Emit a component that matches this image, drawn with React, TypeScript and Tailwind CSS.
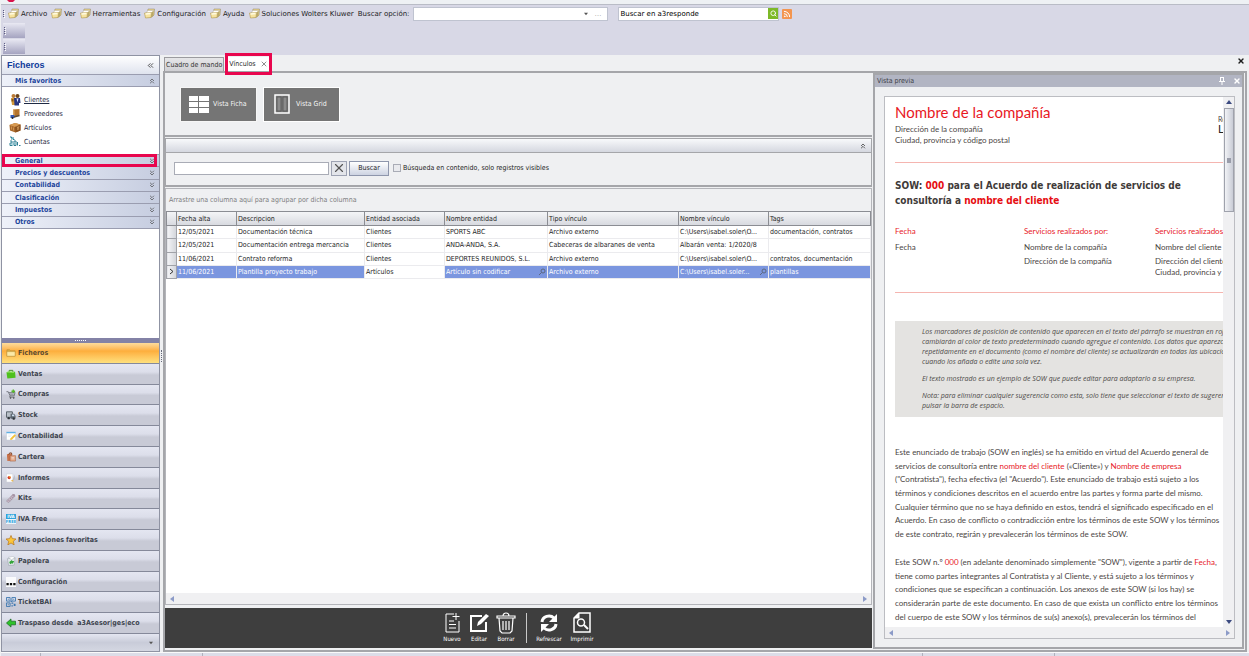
import React from 'react';
import clsx from 'clsx';
import { ChevronsDown, ChevronsLeft, ChevronsUp, Rss, Search, X } from 'lucide-react';

const MENU = ['Archivo', 'Ver', 'Herramientas', 'Configuración', 'Ayuda', 'Soluciones Wolters Kluwer'];

const GROUPS = ['General', 'Precios y descuentos', 'Contabilidad', 'Clasificación', 'Impuestos', 'Otros'];

const COLUMNS = [
  { label: 'Fecha alta', width: 'w-[60px]' },
  { label: 'Descripcion', width: 'w-[128px]' },
  { label: 'Entidad asociada', width: 'w-[80px]' },
  { label: 'Nombre entidad', width: 'w-[103px]' },
  { label: 'Tipo vínculo', width: 'w-[131px]' },
  { label: 'Nombre vínculo', width: 'w-[90px]' },
  { label: 'Tags', width: '' },
];

const ROWS = [
  ['12/05/2021', 'Documentación técnica', 'Clientes', 'SPORTS ABC', 'Archivo externo', 'C:\\Users\\isabel.soler\\O...', 'documentación, contratos'],
  ['12/05/2021', 'Documentación entrega mercancia', 'Clientes', 'ANDA-ANDA, S.A.', 'Cabeceras de albaranes de venta', 'Albarán venta: 1/2020/8', ''],
  ['11/06/2021', 'Contrato reforma', 'Clientes', 'DEPORTES REUNIDOS, S.L.', 'Archivo externo', 'C:\\Users\\isabel.soler\\O...', 'contratos, documentación'],
  ['11/06/2021', 'Plantilla proyecto trabajo', 'Artículos', 'Artículo sin codificar', 'Archivo externo', 'C:\\Users\\isabel.soler...', 'plantillas'],
];
const SELECTED_ROW = 3;

// Stacked cards over a yellow folder, used by every menu entry
const MenuIcon = () => (
  <svg width="11" height="11" viewBox="0 0 22 22">
    <path d="M8 2h13l-1 12-4 4H5z" fill="#ecd48a" stroke="#8d8566" />
    <path d="M7 5h12l-2 8H4z" fill="#fff" stroke="#b5b1a0" />
    <path d="M1 10l14-1-1 10-11 1z" fill="#f6e3a0" stroke="#a98a35" />
    <path d="M3 12l10-1" stroke="#fffbe0" strokeWidth="3" />
    <path d="M15 9l4-4v10l-5 4z" fill="#b9a868" />
  </svg>
);

const FavIcon = ({ name }: { name: string }) => {
  switch (name) {
    case 'Clientes':
      return (
        <svg width="11" height="12" viewBox="0 0 22 24">
          <circle cx="7" cy="4" r="4" fill="#b97a35" />
          <circle cx="15" cy="4" r="4" fill="#6b4216" />
          <path d="M2 8h9v14H4z" fill="#d39a3a" />
          <path d="M8 8h12l1 10h-3v5H9z" fill="#27357f" />
          <path d="M13 9l2 8 2-8z" fill="#dfe6ff" />
          <path d="M3 10h4v5H3z" fill="#8a5a18" />
        </svg>
      );
    case 'Proveedores':
      return (
        <svg width="11" height="12" viewBox="0 0 22 24">
          <path d="M6 3l13-1v13l-11 2z" fill="#b5742c" />
          <path d="M6 3l3 2v12l-3-2z" fill="#d9a560" />
          <path d="M1 14h8v6H1z" fill="#2f57b5" />
          <path d="M8 18l11-3" stroke="#5f4a34" strokeWidth="3" />
          <circle cx="5" cy="20" r="2" fill="#222" />
        </svg>
      );
    case 'Artículos':
      return (
        <svg width="12" height="11" viewBox="0 0 24 22">
          <path d="M1 6l11-4 11 3v12l-10 4-11-4z" fill="#a9682a" />
          <path d="M1 6l11 4 11-5-11-3z" fill="#d79a52" />
          <path d="M12 10l1 11 10-4V5z" fill="#8a5220" />
          <path d="M5 9v6M9 11v6M16 9l3 6M20 8l-3 8" stroke="#d9a25e" strokeWidth="1.500" />
        </svg>
      );
    default:
      return (
        <svg width="12" height="11" viewBox="0 0 24 22" fill="none" stroke="#2c7f93" strokeWidth="2">
          <path d="M2 2h3v5M8 2v5h3M2 10h4v4H2v5h5M10 10v9h4v-9zM17 12v7M20 19h3" />
          <path d="M4 5h6M3 16h9" stroke="#6db5c4" />
        </svg>
      );
  }
};

const NAV: { label: string; icon: React.ReactNode }[] = [
  {
    label: 'Ficheros',
    icon: (
      <>
        <path d="M2 4h6l2 2h10v12H2z" fill="#d9b04a" stroke="#a9812c" />
        <path d="M2 8h18v10H2z" fill="#fbe9a8" stroke="#b98f35" />
      </>
    ),
  },
  {
    label: 'Ventas',
    icon: (
      <>
        <path d="M7 7V3h8v4" fill="none" stroke="#3c8d1c" strokeWidth="2" />
        <path d="M1 7l19-1 1 13-18 2z" fill="#4fc01e" />
        <path d="M1 7l4-2 14 1-2 3z" fill="#8fe65a" />
      </>
    ),
  },
  {
    label: 'Compras',
    icon: (
      <>
        <path d="M1 6h4l4 9h9l2-7H6M9 15l-1 3h11" fill="none" stroke="#6d7178" strokeWidth="2" />
        <path d="M8 9h10M9 12h8" stroke="#92979e" strokeWidth="2" />
        <circle cx="10" cy="20" r="1.6" fill="#444" />
        <circle cx="17" cy="20" r="1.6" fill="#444" />
        <path d="M16 1v8M12 5h8" stroke="#57b52c" strokeWidth="3" />
      </>
    ),
  },
  {
    label: 'Stock',
    icon: (
      <>
        <path d="M1 4h13v12H1z" fill="#b9c0c8" stroke="#4f5861" strokeWidth="2" />
        <path d="M10 8h8l3 5v6H10z" fill="#5b6570" />
        <path d="M13 10h4l2 4h-6z" fill="#cfe0ee" />
        <circle cx="6" cy="18" r="2.6" fill="#2f343a" />
        <circle cx="17" cy="19" r="2.6" fill="#2f343a" />
      </>
    ),
  },
  {
    label: 'Contabilidad',
    icon: (
      <>
        <path d="M1 2h20v18H1z" fill="#fff" stroke="#b9c4d2" />
        <path d="M1 2h20v3H1z" fill="#5fb0e6" />
        <path d="M9 20l1-4 9-9 3 3-9 9z" fill="#f4c23a" />
        <path d="M5 9h7M5 12h5" stroke="#cfd6df" />
      </>
    ),
  },
  {
    label: 'Cartera',
    icon: (
      <>
        <path d="M2 5l11-2v16l-10 1z" fill="#c9724a" />
        <path d="M9 8h12v12H9z" fill="#e3a888" stroke="#9b5636" />
        <path d="M6 6l2-4h4l1 4" fill="none" stroke="#7d4327" strokeWidth="2" />
        <path d="M12 12h6M12 15h6" stroke="#fff" />
      </>
    ),
  },
  {
    label: 'Informes',
    icon: (
      <>
        <path d="M1 2h14v18H1z" fill="#fff" stroke="#c5c9d2" />
        <circle cx="7" cy="10" r="3.6" fill="#d23a2a" />
        <path d="M7 10V6.400a3.600 3.600 0 0 1 3.600 3.600z" fill="#f3c12b" />
        <path d="M20 3l-6 13 5-2z" fill="#b9bdc6" />
        <path d="M10 17l6-2v4z" fill="#e8b64c" />
      </>
    ),
  },
  {
    label: 'Kits',
    icon: (
      <>
        <path d="M1 18L15 3l5 4L6 21z" fill="#c8b8c6" stroke="#8b7c8c" />
        <path d="M5 15l3 3M9 11l3 3M12 8l3 3" stroke="#6f6070" />
        <circle cx="17" cy="5" r="3" fill="#a695a6" />
      </>
    ),
  },
  {
    label: 'IVA Free',
    icon: (
      <>
        <path d="M0 0h22v11H0z" fill="#2ea3dc" />
        <path d="M0 11h22v11H0z" fill="#e9f5fc" />
        <text x="11" y="9.500" textAnchor="middle" fontSize="10" fontWeight="700" fill="#fff">IVA</text>
        <text x="11" y="20.500" textAnchor="middle" fontSize="9" fontWeight="700" fill="#2ea3dc">FREE</text>
      </>
    ),
  },
  {
    label: 'Mis opciones favoritas',
    icon: <path d="M11 1l3 7 8 .8-6 5 2 8-7-4.300L4 21.800l2-8-6-5L8 8z" fill="#fcc63a" stroke="#b5731a" strokeWidth="1.500" />,
  },
  {
    label: 'Papelera',
    icon: (
      <>
        <path d="M3 6l17-2-2 16-12 1z" fill="#e3e8ec" stroke="#8c969e" />
        <path d="M5 3l10-2 5 3-8 4z" fill="#fff" stroke="#a6afb6" />
        <path d="M7 13l6-4 1 2 4 0-3 6-2-1-4 2z" fill="#35a53a" />
      </>
    ),
  },
  {
    label: 'Configuración',
    icon: (
      <>
        <path d="M0 0h22v22H0z" fill="#fafafc" />
        <path d="M1 13h5v5H1zM8.500 13h5v5h-5zM16 13h5v5h-5z" fill="#111" />
      </>
    ),
  },
  {
    label: 'TicketBAI',
    icon: (
      <>
        <path d="M1 1h8v8H1zM13 1h8v8h-8zM1 13h8v8H1z" fill="none" stroke="#3d77b0" strokeWidth="2" />
        <path d="M4 4h2v2H4zM16 4h2v2h-2zM4 16h2v2H4zM12 12h4v3h-4zM17 15h4v5h-4zM12 18h3v3h-3zM10 9h3v2h-3z" fill="#3d77b0" />
      </>
    ),
  },
  {
    label: 'Traspaso desde\u00a0 a3Asesor|ges|eco',
    icon: <path d="M1 11l10-9v5h10v8H11v5z" fill="#2fc32a" stroke="#12601a" strokeWidth="1.500" />,
  },
];

const ToolIcon = ({ name }: { name: string }) => (
  <svg width="20" height="22" viewBox="0 0 20 22" fill="none" stroke="#fff" strokeWidth="1">
    {name === 'Nuevo' && <path d="M12 2H4v18h13V9M14 1v7M10.500 4.500h7M7 9h5M7 12.500h7M7 16h7" />}
    {name === 'Editar' && (
      <>
        <path d="M13 4H2v15h15v-9" strokeWidth="2" />
        <path d="M8 14l1-4 8-8 3 2-8 8z" fill="#fff" stroke="none" />
      </>
    )}
    {name === 'Borrar' && <path d="M1 6V4h18v2zM7 4c0-4 6-4 6 0M3 6l1 13 2 2h8l2-2 1-13M7 9v9M10 9v9M13 9v9" strokeWidth="1.200" />}
    {name === 'Refrescar' && (
      <>
        <path d="M3 10a7 6.500 0 0 1 12-4M17 12a7 6.500 0 0 1-12 4" strokeWidth="3" />
        <path d="M18 2v8h-8zM2 20v-8h8z" fill="#fff" stroke="none" />
      </>
    )}
    {name === 'Imprimir' && (
      <>
        <path d="M7 1h11v19H2V6z" strokeWidth="1.500" />
        <path d="M7 1v5H2z" fill="#fff" />
        <circle cx="9" cy="10.500" r="3.500" strokeWidth="1.500" />
        <path d="M12 13l4 4" strokeWidth="2" />
      </>
    )}
  </svg>
);

const Grip = () => (
  <span className="flex flex-col gap-px">
    {[0, 1, 2, 3].map((i) => (
      <i key={i} className="size-px bg-[#5c5c80] shadow-[1px_1px_0_#fff]" />
    ))}
  </span>
);

const Triangle = ({ dir, className }: { dir: 'up' | 'down' | 'left' | 'right'; className?: string }) => (
  <svg width="6" height="6" viewBox="0 0 6 6" className={className} fill="currentColor">
    {dir === 'up' && <path d="M0 5l3-4 3 4z" />}
    {dir === 'down' && <path d="M0 1l3 4 3-4z" />}
    {dir === 'left' && <path d="M5 0L1 3l4 3z" />}
    {dir === 'right' && <path d="M1 0l4 3-4 3z" />}
  </svg>
);

const HorizontalScrollbar = () => (
  <div className="flex h-[11px] shrink-0 items-center justify-between bg-[#f0f0f2] px-[3px] text-[#8c9bc8]">
    <Triangle dir="left" />
    <Triangle dir="right" />
  </div>
);

const MenuBar = () => (
  <header className="h-[50px] shrink-0 bg-[#d8d8e6] pl-0.5">
    <div className="flex h-[17px] items-center text-[#1c1c24] font-['DejaVu_Sans',sans-serif]">
      <Grip />
      <nav className="ml-1 flex items-center gap-1">
        {MENU.map((item) => (
          <button key={item} className="flex items-center gap-0.5 whitespace-nowrap">
            <MenuIcon />
            {item}
          </button>
        ))}
      </nav>
      <label htmlFor="opcion" className="ml-1 whitespace-nowrap">Buscar opción:</label>
      <div className="ml-1 flex h-[14px] w-[195px] items-center border border-[#bfc3d0] bg-white">
        <input id="opcion" className="h-full min-w-0 flex-1 px-1 outline-none" />
        <Triangle dir="down" className="size-1 text-[#555]" />
        <span className="mx-1.5 text-[#9a9a9a]">…</span>
      </div>
      <div className="ml-2.5 flex h-[14px] w-[161px] items-center border border-[#bfc3d0] bg-white">
        <input aria-label="Buscar en a3responde" defaultValue="Buscar en a3responde" className="h-full min-w-0 flex-1 px-px text-black outline-none" />
        <button aria-label="Buscar" className="flex h-[11px] w-[10px] items-center justify-center bg-[#7db928] text-white">
          <Search size={7} strokeWidth={3} />
        </button>
      </div>
      <button aria-label="RSS" className="ml-[3px] flex size-[10px] items-center justify-center rounded-[1px] bg-[#f3954f] text-white">
        <Rss size={8} strokeWidth={3} />
      </button>
    </div>
    {[0, 1].map((i) => (
      <div key={i} className="mt-px flex h-[15px] w-[22px] items-center bg-linear-to-b from-[#e9e9f3] to-[#a5a4c0] pl-px">
        <Grip />
      </div>
    ))}
  </header>
);

const GroupHeader = ({ label, open, marked }: { label: string; open?: boolean; marked?: boolean }) => (
  <button className="relative flex w-full items-center justify-between border-b border-[#9a9db0] bg-linear-to-r from-[#eef1f9] to-[#c6cde0] pr-[3px] pl-[13px] font-bold text-[#1d459c]">
    {label}
    {open ? <ChevronsUp size={8} className="text-[#444]" /> : <ChevronsDown size={8} className="text-[#444]" />}
    {marked && <span className="absolute -inset-y-px right-0.5 left-0 border-3 border-[#e8064e]" />}
  </button>
);

const Sidebar = () => (
  <aside className="flex w-[159px] shrink-0 flex-col border border-[#8f93a3] bg-white">
    <div className="flex h-[18px] shrink-0 items-center justify-between bg-linear-to-b from-white to-[#dfe3ee] px-1">
      <h2 className="pl-px text-[9px] font-bold text-[#0f3a9b] font-['Liberation_Sans',sans-serif]">Ficheros</h2>
      <button aria-label="Contraer"><ChevronsLeft size={9} /></button>
    </div>
    <div className="grid h-[13px] shrink-0 border-t border-[#9a9db0]">
      <GroupHeader label="Mis favoritos" open />
    </div>
    <ul className="flex h-[67px] shrink-0 flex-col justify-center gap-0.5 pl-[7px]">
      {['Clientes', 'Proveedores', 'Artículos', 'Cuentas'].map((item, i) => (
        <li key={item}>
          <a href="#" className={clsx('flex h-3 items-center gap-[3px] text-[#1f2a44]', i === 0 && 'underline')}>
            <span className="flex w-3 justify-center"><FavIcon name={item} /></span>
            {item}
          </a>
        </li>
      ))}
    </ul>
    <div className="grid h-[75px] shrink-0 auto-rows-fr border-t border-[#9a9db0]">
      {GROUPS.map((g) => <GroupHeader key={g} label={g} marked={g === 'General'} />)}
    </div>
    <div className="min-h-0 flex-1" />
    <div className="flex h-[5px] shrink-0 items-center justify-center gap-px bg-[#8382a6]">
      {[0, 1, 2, 3, 4, 5].map((i) => <i key={i} className="size-px bg-white" />)}
    </div>
    <nav className="grid h-[291px] shrink-0 auto-rows-fr">
      {NAV.map(({ label, icon }, i) => (
        <button
          key={label}
          className={clsx(
            'flex items-center gap-0.5 border-b border-[#85899a] pl-1 font-bold whitespace-nowrap',
            i === 0
              ? 'bg-linear-to-b from-[#fddc9c] from-0% via-[#fdae3c] via-40% to-[#fee07c] text-[#5c4a2e]'
              : 'bg-linear-to-b from-[#e4e6f1] from-0% via-[#dcdeea] via-40% to-[#c8cad6] to-55% text-[#3e454f]',
          )}
        >
          <svg width="10" height="10" viewBox="0 0 22 22">{icon}</svg>
          {label}
        </button>
      ))}
    </nav>
    <div className="flex h-[17px] shrink-0 items-center justify-end bg-linear-to-b from-[#e4e6f1] via-[#c9ccd9] to-[#d4d7e2] pr-1.5">
      <Triangle dir="down" className="size-1 text-[#555]" />
    </div>
  </aside>
);

const TabStrip = () => (
  <div className="flex h-4 shrink-0 items-end pl-px">
    <button className="h-[14px] border border-b-0 border-[#9b9b9f] bg-linear-to-b from-[#e6e6e8] to-[#d0d0d4] px-px text-[#333]">Cuadro de mando</button>
    <div className="relative ml-px flex h-[14px] items-center gap-1 bg-white pr-0.5 pl-1">
      <button>Vínculos</button>
      <button aria-label="Cerrar Vínculos"><X size={8} className="text-[#555]" /></button>
      <span className="absolute -top-1 -right-0.5 -bottom-1 left-0 z-10 border-3 border-[#e8064e]" />
    </div>
    <button aria-label="Cerrar" className="mr-0.5 mb-1.5 ml-auto"><X size={8} strokeWidth={4} /></button>
  </div>
);

const ViewButtons = () => (
  <div className="flex h-[64px] shrink-0 items-center gap-1.5 border-b-2 border-[#a5a6aa] bg-[#eff0f2] pl-[15px]">
    <button className="flex h-[35px] w-[77px] items-center gap-1 border border-[#f6f6f6] bg-[#757575] pl-2 text-[#f4f4f4]">
      <svg width="20" height="17" viewBox="0 0 20 17" fill="#fff">
        <path d="M0 0h9v5H0zM10 0h10v5H10zM0 6h9v5H0zM10 6h10v5H10zM0 12h9v5H0zM10 12h10v5H10z" />
      </svg>
      Vista Ficha
    </button>
    <button className="flex h-[35px] w-[77px] items-center gap-1.5 border border-white bg-[#757575] pl-2.5 text-[#f4f4f4]">
      <svg width="16" height="20" viewBox="0 0 16 20" fill="none">
        <path d="M1 1h14v18H1z" stroke="#fff" strokeWidth="1.500" />
        <path d="M3 3h4v14H3zM9 3h4v14H9z" fill="#8b8b8b" stroke="#5e5e5e" />
      </svg>
      Vista Grid
    </button>
  </div>
);

const SearchPanel = () => (
  <section className="h-[49px] shrink-0 border border-b-2 border-[#a5a6aa] bg-[#eff0f2]">
    <div className="flex h-[14px] items-center justify-end border-b border-[#a5a6aa] bg-linear-to-b from-[#f8f9fb] to-[#d5d8e0] pr-1">
      <button aria-label="Contraer búsqueda"><ChevronsUp size={8} /></button>
    </div>
    <div className="flex h-[30px] items-center pl-2">
      <input aria-label="Texto de búsqueda" className="h-[13px] w-[155px] border border-[#a9acb6] bg-white px-1 outline-none" />
      <button aria-label="Borrar búsqueda" className="ml-0.5 flex h-[15px] w-4 items-center justify-center border border-[#9ea3b3] bg-[#e3e5ea]">
        <X size={14} className="text-[#555]" />
      </button>
      <button className="ml-0.5 h-[15px] w-10 border border-[#8e96ac] bg-linear-to-b from-white to-[#cdd3e2]">Buscar</button>
      <label className="ml-1 flex items-center gap-0.5">
        <input type="checkbox" className="size-2 appearance-none border border-[#a9acb6] bg-[#e9eaee]" />
        Búsqueda en contenido, solo registros visibles
      </label>
    </div>
  </section>
);

const LinksTable = () => (
  <section className="flex min-h-0 flex-1 flex-col border border-[#b4b5ba] bg-white">
    <p className="flex h-[22px] shrink-0 items-center bg-[#eff0f2] pl-[3px] text-[#7d7d80]">Arrastre una columna aquí para agrupar por dicha columna</p>
    <table className="h-[68px] w-full table-fixed border-collapse">
      <thead>
        <tr className="h-[14px] bg-linear-to-b from-[#f4f5f7] to-[#d6d8de]">
          <th className="w-[10px] border border-[#8b8d93]" />
          {COLUMNS.map((c) => (
            <th key={c.label} className={clsx('border border-[#8b8d93] px-px text-left font-normal', c.width)}>{c.label}</th>
          ))}
        </tr>
      </thead>
      <tbody>
        {ROWS.map((row, r) => (
          <tr key={r}>
            <td className="border border-[#a0a2a8] bg-linear-to-r from-[#f3f4f6] to-[#d2d4da]">
              {r === SELECTED_ROW && (
                <svg width="5" height="7" viewBox="0 0 5 7" className="mx-auto" fill="none" stroke="#333"><path d="M1 1l3 2.500L1 6" /></svg>
              )}
            </td>
            {row.map((cell, c) => (
              <td
                key={c}
                className={clsx(
                  'overflow-hidden border border-[#ebebee] px-px whitespace-nowrap',
                  r === SELECTED_ROW && c !== 2 && 'bg-[#7b96df] text-white',
                )}
              >
                <span className="flex items-center justify-between">
                  {cell}
                  {r === SELECTED_ROW && (c === 3 || c === 5) && (
                    <svg width="8" height="8" viewBox="0 0 8 8" fill="none" stroke="#5d6880"><circle cx="5" cy="3" r="2" /><path d="M3.500 4.500L1 7" /></svg>
                  )}
                </span>
              </td>
            ))}
          </tr>
        ))}
      </tbody>
    </table>
    <div className="min-h-0 flex-1" />
    <HorizontalScrollbar />
  </section>
);

const ActionBar = () => (
  <footer className="mt-0.5 flex h-10 shrink-0 items-center justify-center bg-[#3e3e3e] text-[6px] text-white">
    {['Nuevo', 'Editar', 'Borrar', 'Refrescar', 'Imprimir'].map((name) => (
      <React.Fragment key={name}>
        {name === 'Refrescar' && <span className="mr-1.5 ml-1.5 h-[30px] w-px bg-[#c8c8c8]" />}
        <button className={clsx('flex flex-col items-center', name === 'Refrescar' || name === 'Imprimir' ? 'w-[33px]' : 'w-[27px]')}>
          <ToolIcon name={name} />
          {name}
        </button>
      </React.Fragment>
    ))}
  </footer>
);

const Red = ({ children }: { children: React.ReactNode }) => <span className="text-[#e8191f]">{children}</span>;

const PARAGRAPH_1 = [
  'Este enunciado de trabajo (SOW en inglés) se ha emitido en virtud del Acuerdo general de',
  <>servicios de consultoría entre <Red>nombre del cliente</Red> («Cliente») y <Red>Nombre de empresa</Red></>,
  '("Contratista"), fecha efectiva (el "Acuerdo"). Este enunciado de trabajo está sujeto a los',
  'términos y condiciones descritos en el acuerdo entre las partes y forma parte del mismo.',
  'Cualquier término que no se haya definido en estos, tendrá el significado especificado en el',
  'Acuerdo. En caso de conflicto o contradicción entre los términos de este SOW y los términos',
  'de este contrato, regirán y prevalecerán los términos de este SOW.',
];

const PARAGRAPH_2 = [
  <>Este SOW n.º <Red>000</Red> (en adelante denominado simplemente "SOW"), vigente a partir de <Red>Fecha</Red>,</>,
  'tiene como partes integrantes al Contratista y al Cliente, y está sujeto a los términos y',
  'condiciones que se especifican a continuación. Los anexos de este SOW (si los hay) se',
  'considerarán parte de este documento. En caso de que exista un conflicto entre los términos',
  'del cuerpo de este SOW y los términos de su(s) anexo(s), prevalecerán los términos del',
];

const Lines = ({ lines, className }: { lines: React.ReactNode[]; className: string }) => (
  <p className={clsx('grid auto-rows-fr items-center', className)}>
    {lines.map((line, i) => <span key={i}>{line}</span>)}
  </p>
);

const DocumentPage = () => (
  <article className="min-w-0 flex-1 overflow-hidden pt-1.5 pl-2.5 text-[8px] whitespace-nowrap text-[#4b4644] font-['Lato',sans-serif]">
    <header className="flex justify-between">
      <div>
        <h1 className="text-[15px] leading-[18px] text-[#e8191f]">Nombre de la compañía</h1>
        <p className="mt-[3px] leading-[11px]">Dirección de la compañía</p>
        <p className="leading-[11px]">Ciudad, provincia y código postal</p>
      </div>
      <div className="w-[5px] overflow-hidden pt-3">
        <p className="text-[7px] leading-[8px]">Re</p>
        <p className="text-[11px] leading-[12px] text-[#222]">Lo</p>
      </div>
    </header>
    <hr className="mt-4 border-[#f5b5b0]" />
    <h2 className="mt-[15px] text-[10px] leading-[15px] font-bold text-[#3f3b39] font-['DejaVu_Sans_Condensed',sans-serif]">
      SOW: <span className="text-[#e60d12]">000</span> para el Acuerdo de realización de servicios de<br />
      consultoría a <span className="text-[#e60d12]">nombre del cliente</span>
    </h2>
    <div className="mt-[18px] grid h-[62px] grid-cols-[129px_131px_1fr] leading-[11px]">
      <div>
        <p className="text-[#e8191f]">Fecha</p>
        <p className="mt-[5px]">Fecha</p>
      </div>
      <div>
        <p className="text-[#e8191f]">Servicios realizados por:</p>
        <p className="mt-[5px]">Nombre de la compañía</p>
        <p className="mt-[3px]">Dirección de la compañía</p>
      </div>
      <div className="min-w-0 overflow-hidden">
        <p className="text-[#e8191f]">Servicios realizados para:</p>
        <p className="mt-[5px]">Nombre del cliente</p>
        <p className="mt-[3px]">Dirección del cliente</p>
        <p>Ciudad, provincia y código postal</p>
      </div>
    </div>
    <div className="mt-1 h-px bg-[#f5b5b0]" />
    <aside className="mt-[28px] overflow-hidden bg-[#e4e3e1] py-1.5 pl-[27px] text-[7px] leading-[10px] text-[#4c4a48] italic font-['Open_Sans',sans-serif]">
      <p>
        Los marcadores de posición de contenido que aparecen en el texto del párrafo se muestran en rojo<br />
        cambiarán al color de texto predeterminado cuando agregue el contenido. Los datos que aparezcan<br />
        repetidamente en el documento (como el nombre del cliente) se actualizarán en todas las ubicaciones<br />
        cuando los añada o edite una sola vez.
      </p>
      <p className="mt-[7px]">El texto mostrado es un ejemplo de SOW que puede editar para adaptarlo a su empresa.</p>
      <p className="mt-[7px]">
        Nota: para eliminar cualquier sugerencia como esta, solo tiene que seleccionar el texto de sugerencia y<br />
        pulsar la barra de espacio.
      </p>
    </aside>
    <Lines lines={PARAGRAPH_1} className="mt-[28px] h-[96px]" />
    <Lines lines={PARAGRAPH_2} className="mt-3.5 h-[69px]" />
  </article>
);

const PreviewPanel = () => (
  <section className="flex w-[371px] shrink-0 flex-col border-2 border-[#a5a6aa] bg-[#eff0f2]">
    <div className="flex h-3 shrink-0 items-center bg-[#b2b5c3] px-0.5 text-[#3d4049]">
      Vista previa
      <button aria-label="Anclar" className="mr-2 ml-auto">
        <svg width="6" height="8" viewBox="0 0 6 8" fill="none" stroke="#fff"><path d="M1.500 0v4M4.500 0v4M1.500 .5h3M0 4.500h6M3 5v3" /></svg>
      </button>
      <button aria-label="Cerrar vista previa" className="-mr-px"><X size={8} strokeWidth={4} className="text-white" /></button>
    </div>
    <div className="mt-[9px] mr-[7px] mb-2 ml-[9px] flex min-h-0 flex-1 flex-col border border-[#bcbdc2] bg-white">
      <div className="flex min-h-0 flex-1">
        <DocumentPage />
        <div className="flex w-[11px] shrink-0 flex-col items-center bg-[#f0f0f2] text-[#3b4a80]">
          <Triangle dir="up" className="mt-0.5 mb-[3px] shrink-0" />
          <div className="flex h-[104px] w-[10px] items-center justify-center border border-[#9fa2ac] bg-linear-to-r from-[#f2f3f6] to-[#c9ccd6]">
            <i className="h-[5px] w-1 bg-[#9a9daa]" />
          </div>
          <Triangle dir="down" className="mt-auto mb-0.5 shrink-0" />
        </div>
      </div>
      <HorizontalScrollbar />
    </div>
  </section>
);

const App: React.FC = () => {
  return (
    <div className="flex h-screen flex-col overflow-hidden bg-[#eff0f2] pl-px text-[7px] leading-[10px] text-[#1e1e1e] font-['DejaVu_Sans_Condensed',sans-serif]">
      <div className="h-[5px] shrink-0 overflow-hidden border-b border-[#b9bcc6] bg-[#eef1f4]">
        <svg width="8" height="2" viewBox="0 0 8 2" className="ml-1.5 block"><path d="M0 0h8L6 2H2z" fill="#d8124b" /></svg>
      </div>
      <MenuBar />
      <div className="flex min-h-0 flex-1">
        <Sidebar />
        <div className="flex w-[3px] shrink-0 flex-col items-center justify-center">
          <span className="mt-1 h-3 border-l border-dotted border-[#666a7a]" />
        </div>
        <div className="flex min-w-0 flex-1 flex-col pr-0.5">
          <TabStrip />
          <main className="flex min-h-0 flex-1 border-2 border-[#a5a6aa] pr-px pb-px">
            <div className="flex min-w-0 flex-1 flex-col gap-px pr-px pb-px">
              <ViewButtons />
              <SearchPanel />
              <LinksTable />
              <ActionBar />
            </div>
            <PreviewPanel />
          </main>
        </div>
      </div>
      <div className="flex h-1 shrink-0 border-t border-[#fafafa] bg-[#dcdde8]">
        <span className="w-10 border-r border-[#b0b2bd]" />
        <span className="w-[162px] border-r border-[#b0b2bd]" />
        <span className="w-[720px] border-r border-[#b0b2bd]" />
        <span className="w-[132px] border-r border-[#b0b2bd]" />
      </div>
    </div>
  );
};

export default App;
